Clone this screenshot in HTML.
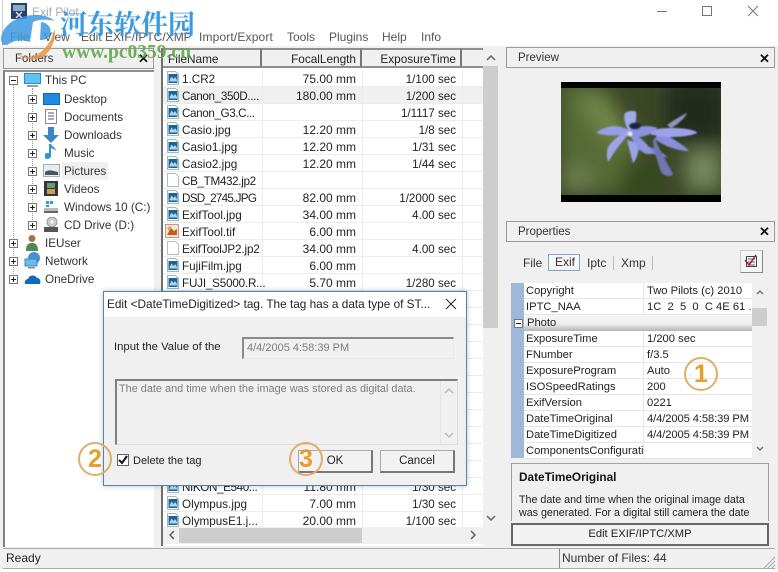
<!DOCTYPE html>
<html lang="en">
<head>
<meta charset="utf-8">
<title>Exif Pilot</title>
<style>
html,body{margin:0;padding:0}
body{width:778px;height:572px;overflow:hidden;position:relative;background:#f0f0f0;font-family:"Liberation Sans",sans-serif;font-size:12px;color:#222}
div,span,svg{position:absolute;box-sizing:border-box}
.t{white-space:nowrap;line-height:16px;height:16px}
.r{text-align:right}
.m{color:#555;top:29px}
.hd{background:#f0f0f0;border:1px solid #9a9a9a;height:21px;line-height:21px;padding-left:11px;color:#333;font-size:11.5px}
.x{color:#111;font-weight:bold;font-size:13px}
.cell{top:48px;height:20px;background:#f0f0f0;border-top:2px solid #8f8f8f;border-bottom:2px solid #8f8f8f;border-right:2px solid #777;line-height:19px;white-space:nowrap;font-size:11.8px}
.row{left:163px;width:320px;height:17px;border-bottom:1px solid #ececec;line-height:17px;white-space:nowrap}
.row b{font-weight:normal;position:absolute;top:1px}
.row .a{left:19px;font-size:11.7px}
.row .b{left:99px;width:94px;text-align:right}
.row .c{left:199px;width:94px;text-align:right;font-size:11.6px}
.row svg{left:4px;top:1px}
.p{left:524px;width:228px;height:16px;border-bottom:1px solid #e6e6e6;line-height:15px;white-space:nowrap;font-size:11.2px;color:#222}
.p b{position:absolute;font-weight:normal;top:1px}
.p .n{left:2px;width:117px;overflow:hidden}
.p .v{left:123px}
.tree{line-height:18px;height:18px;white-space:nowrap;color:#333;font-size:11.7px;margin-top:1px}
.pm{width:9px;height:9px;background:#fff;border:1px solid #777}
.pm:before{content:"";position:absolute;left:1px;top:3px;width:5px;height:1px;background:#222}
.pm.pl:after{content:"";position:absolute;left:3px;top:1px;width:1px;height:5px;background:#222}
.circ{width:34px;height:34px;border-radius:50%;border:2px solid #e0ad6a;background:transparent;text-align:center;color:#e89c2a;font:bold 25px/30px "Liberation Sans",sans-serif}
.btn{background:#f2f2f2;border:1px solid #aaa;border-right:2px solid #777;border-bottom:2px solid #777;text-align:center;line-height:20px;color:#222;font-size:11.5px}
</style>
</head>
<body>
<svg width="0" height="0" style="left:0;top:0">
<defs>
<symbol id="pic" viewBox="0 0 12 14"><path d="M.5.5h8l3 3v10H.5z" fill="#fff" stroke="#9bb"/><rect x="1.500" y="3" width="9" height="9" fill="#1b6197"/><path d="M2.500 9.500l2-4 2 2.500 1.500-2 2 3v1.500H2.500z" fill="#a9d6ee"/></symbol>
<symbol id="blank" viewBox="0 0 12 14"><path d="M.5.5h8l3 3v10H.5z" fill="#fff" stroke="#bbb"/></symbol>
<symbol id="tif" viewBox="0 0 14 14"><rect x=".5" y=".5" width="13" height="13" fill="#f5e8d5" stroke="#b99"/><path d="M2 11l4-7 3 3 3-2v6z" fill="#c8581f"/><path d="M2 4l3-2 2 2-3 3z" fill="#e8a050"/></symbol>
</defs>
</svg>

<!-- title + menu -->
<div style="left:0;top:0;width:778px;height:46px;background:#fff"></div>
<div style="left:2px;top:0;width:1px;height:46px;background:#ccc"></div>
<svg style="left:11px;top:3px" width="16" height="16" viewBox="0 0 16 16"><rect width="16" height="16" fill="#26406e"/><rect x="2" y="2" width="12" height="6" fill="#8ea8cc"/><path d="M5 9l6 6M11 9l-6 6" stroke="#ddd" stroke-width="1.500"/></svg>
<div class="t" style="left:32px;top:4px;color:#aaa">Exif Pilot</div>

<div class="t m" style="left:10px">File</div>
<div class="t m" style="left:44px">View</div>
<div class="t m" style="left:81px">Edit EXIF/IPTC/XMP</div>
<div class="t m" style="left:199px;letter-spacing:.15px">Import/Export</div>
<div class="t m" style="left:287px">Tools</div>
<div class="t m" style="left:329px">Plugins</div>
<div class="t m" style="left:382px">Help</div>
<div class="t m" style="left:421px">Info</div>
<svg style="left:650px;top:0" width="128" height="24" viewBox="0 0 128 24" fill="none" stroke="#777"><path d="M7 11.500h10"/><rect x="52.500" y="6.500" width="9" height="9"/><path d="M98 6l10 10M108 6l-10 10"/></svg>

<!-- folders panel -->
<div class="hd" style="left:3px;top:48px;width:151px">Folders</div>
<div class="x t" style="left:138px;top:51px">✕</div>
<div style="left:3px;top:70px;width:151px;height:477px;background:#fff;border-left:2px solid #808080;border-top:2px solid #909090"></div>
<div style="left:13px;top:85px;height:195px;border-left:1px dotted #999"></div>
<div style="left:32px;top:88px;height:140px;border-left:1px dotted #999"></div>

<span class="pm" style="left:9px;top:76px"></span>
<svg style="left:24px;top:73px" width="17" height="16" viewBox="0 0 17 16"><rect x=".5" y=".5" width="16" height="10" fill="#5cc4f5" stroke="#2a88c8"/><rect x="3" y="12" width="11" height="2" fill="#99a"/></svg>
<div class="tree" style="left:45px;top:71px">This PC</div>

<span class="pm pl" style="left:28px;top:95px"></span>
<svg style="left:43px;top:92px" width="17" height="14"><rect x=".5" y="1.500" width="16" height="11" fill="#1f8ae0" stroke="#1565a8"/></svg>
<div class="tree" style="left:64px;top:90px">Desktop</div>

<span class="pm pl" style="left:28px;top:113px"></span>
<svg style="left:45px;top:109px" width="13" height="16" fill="none" stroke="#888"><rect x=".5" y=".5" width="11" height="14" fill="#fff"/><path d="M3 4h6M3 7h6M3 10h6" stroke="#557"/></svg>
<div class="tree" style="left:64px;top:108px">Documents</div>

<span class="pm pl" style="left:28px;top:131px"></span>
<svg style="left:43px;top:127px" width="16" height="16"><path d="M5 0h6v8h5l-8 8-8-8h5z" fill="#3d85c6"/></svg>
<div class="tree" style="left:64px;top:126px">Downloads</div>

<span class="pm pl" style="left:28px;top:149px"></span>
<svg style="left:45px;top:144px" width="13" height="17"><path d="M6 0v12a3.500 3 0 1 1-2-2.700V0z" fill="#2e95d3"/><path d="M6 0c1 3 5 3 5 7-1-2-3-2-5-3z" fill="#2e95d3"/></svg>
<div class="tree" style="left:64px;top:144px">Music</div>

<span class="pm pl" style="left:28px;top:167px"></span>
<div style="left:62px;top:162px;width:46px;height:18px;background:#f0f0f0"></div>
<svg style="left:43px;top:164px" width="17" height="14"><rect x=".5" y=".5" width="16" height="12" fill="#e8eef0" stroke="#aaa"/><path d="M2 8c4-3 8-1 13 0v3H2z" fill="#456"/></svg>
<div class="tree" style="left:64px;top:162px">Pictures</div>

<span class="pm pl" style="left:28px;top:185px"></span>
<svg style="left:44px;top:181px" width="14" height="15"><rect width="14" height="15" fill="#334"/><rect x="3" y="2" width="8" height="5" fill="#6a9a70"/><rect x="3" y="8" width="8" height="5" fill="#c9a050"/></svg>
<div class="tree" style="left:64px;top:180px">Videos</div>

<span class="pm pl" style="left:28px;top:203px"></span>
<svg style="left:43px;top:200px" width="16" height="14"><rect x="1" y="8" width="14" height="5" fill="#bbb"/><rect x="1" y="11" width="14" height="2" fill="#666"/><rect x="3" y="1" width="3" height="3" fill="#2ba3c8"/><rect x="7" y="1" width="3" height="3" fill="#2ba3c8"/><rect x="3" y="5" width="3" height="2" fill="#2ba3c8"/></svg>
<div class="tree" style="left:64px;top:198px">Windows 10 (C:)</div>

<span class="pm pl" style="left:28px;top:221px"></span>
<svg style="left:43px;top:217px" width="16" height="16"><circle cx="9" cy="5" r="5" fill="#ccc" stroke="#999"/><circle cx="9" cy="5" r="1.500" fill="#fff"/><rect x="1" y="10" width="14" height="5" fill="#555"/></svg>
<div class="tree" style="left:64px;top:216px">CD Drive (D:)</div>

<span class="pm pl" style="left:9px;top:239px"></span>
<svg style="left:25px;top:234px" width="14" height="17"><circle cx="7" cy="4.500" r="3.500" fill="#a8714a"/><path d="M1 17c0-7 3-8 6-8s6 1 6 8z" fill="#4f8a50"/></svg>
<div class="tree" style="left:45px;top:234px">IEUser</div>

<span class="pm pl" style="left:9px;top:257px"></span>
<svg style="left:24px;top:252px" width="17" height="17"><circle cx="10" cy="6" r="6" fill="#4a90d0"/><rect x="1" y="7" width="12" height="7" fill="#6fb8e8" stroke="#38c"/><rect x="4" y="15" width="7" height="1.500" fill="#888"/></svg>
<div class="tree" style="left:45px;top:252px">Network</div>

<span class="pm pl" style="left:9px;top:275px"></span>
<svg style="left:24px;top:273px" width="17" height="12"><path d="M1 11c-1-3 1-5 3-5 1-4 7-5 9-1 3 0 4 3 3 6z" fill="#0f6cbd"/></svg>
<div class="tree" style="left:45px;top:270px">OneDrive</div>

<!-- file list -->
<div style="left:161px;top:48px;width:322px;height:498px;background:#fff;border-left:2px solid #707070"></div>
<div class="cell" style="left:163px;width:99px;padding-left:5px">FileName</div>
<div class="cell r" style="left:262px;width:100px;padding-right:4px">FocalLength</div>
<div class="cell r" style="left:362px;width:100px;padding-right:4px">ExposureTime</div>
<div class="cell" style="left:462px;width:21px;border-right:0"></div>

<div style="left:163px;top:70px;width:320px;height:457px;overflow:hidden">
<div class="row" style="left:0;top:0"><svg width="12" height="14"><use href="#pic"/></svg><b class="a">1.CR2</b><b class="b">75.00 mm</b><b class="c">1/100 sec</b></div>
<div class="row" style="left:0;top:17px;background:#f0f0f0"><svg width="12" height="14"><use href="#pic"/></svg><b class="a" style="letter-spacing:-.35px">Canon_350D....</b><b class="b">180.00 mm</b><b class="c">1/200 sec</b></div>
<div class="row" style="left:0;top:34px"><svg width="12" height="14"><use href="#pic"/></svg><b class="a" style="letter-spacing:-.4px">Canon_G3.C...</b><b class="c">1/1117 sec</b></div>
<div class="row" style="left:0;top:51px"><svg width="12" height="14"><use href="#pic"/></svg><b class="a">Casio.jpg</b><b class="b">12.20 mm</b><b class="c">1/8 sec</b></div>
<div class="row" style="left:0;top:68px"><svg width="12" height="14"><use href="#pic"/></svg><b class="a">Casio1.jpg</b><b class="b">12.20 mm</b><b class="c">1/31 sec</b></div>
<div class="row" style="left:0;top:85px"><svg width="12" height="14"><use href="#pic"/></svg><b class="a">Casio2.jpg</b><b class="b">12.20 mm</b><b class="c">1/44 sec</b></div>
<div class="row" style="left:0;top:102px"><svg width="12" height="14"><use href="#blank"/></svg><b class="a" style="letter-spacing:-.35px">CB_TM432.jp2</b></div>
<div class="row" style="left:0;top:119px"><svg width="12" height="14"><use href="#pic"/></svg><b class="a" style="letter-spacing:-.75px">DSD_2745.JPG</b><b class="b">82.00 mm</b><b class="c">1/2000 sec</b></div>
<div class="row" style="left:0;top:136px"><svg width="12" height="14"><use href="#pic"/></svg><b class="a">ExifTool.jpg</b><b class="b">34.00 mm</b><b class="c">4.00 sec</b></div>
<div class="row" style="left:0;top:153px"><svg width="14" height="14" style="left:2px"><use href="#tif"/></svg><b class="a">ExifTool.tif</b><b class="b">6.00 mm</b></div>
<div class="row" style="left:0;top:170px"><svg width="12" height="14"><use href="#blank"/></svg><b class="a" style="letter-spacing:-.15px">ExifToolJP2.jp2</b><b class="b">34.00 mm</b><b class="c">4.00 sec</b></div>
<div class="row" style="left:0;top:187px"><svg width="12" height="14"><use href="#pic"/></svg><b class="a">FujiFilm.jpg</b><b class="b">6.00 mm</b></div>
<div class="row" style="left:0;top:204px"><svg width="12" height="14"><use href="#pic"/></svg><b class="a" style="letter-spacing:-.2px">FUJI_S5000.R...</b><b class="b">5.70 mm</b><b class="c">1/280 sec</b></div>
<div class="row" style="left:0;top:221px"></div><div class="row" style="left:0;top:238px"></div><div class="row" style="left:0;top:255px"></div><div class="row" style="left:0;top:272px"></div><div class="row" style="left:0;top:289px"></div><div class="row" style="left:0;top:306px"></div><div class="row" style="left:0;top:323px"></div><div class="row" style="left:0;top:340px"></div><div class="row" style="left:0;top:357px"></div><div class="row" style="left:0;top:374px"></div><div class="row" style="left:0;top:391px"></div>
<div class="row" style="left:0;top:408px"><svg width="12" height="14"><use href="#pic"/></svg><b class="a" style="letter-spacing:-.4px">NIKON_E540...</b><b class="b">11.80 mm</b><b class="c">1/30 sec</b></div>
<div class="row" style="left:0;top:425px"><svg width="12" height="14"><use href="#pic"/></svg><b class="a">Olympus.jpg</b><b class="b">7.00 mm</b><b class="c">1/30 sec</b></div>
<div class="row" style="left:0;top:442px"><svg width="12" height="14"><use href="#pic"/></svg><b class="a">OlympusE1.j...</b><b class="b">20.00 mm</b><b class="c">1/100 sec</b></div>
</div>
<div style="left:262px;top:70px;width:1px;height:457px;background:#ececec"></div>
<div style="left:362px;top:70px;width:1px;height:457px;background:#ececec"></div>
<div style="left:462px;top:70px;width:1px;height:457px;background:#ececec"></div>

<!-- scrollbars -->
<div style="left:483px;top:48px;width:16px;height:479px;background:#f0f0f0"></div>
<div style="left:483px;top:66px;width:15px;height:262px;background:#cdcdcd"></div>
<svg style="left:483px;top:48px" width="16" height="490" fill="none" stroke="#606060" stroke-width="1.500"><path d="M4 12l4-4 4 4M4 468l4 4 4-4"/></svg>
<div style="left:163px;top:527px;width:336px;height:17px;background:#f0f0f0"></div>
<div style="left:179px;top:528px;width:183px;height:15px;background:#cdcdcd"></div>
<svg style="left:163px;top:527px" width="320" height="17" fill="none" stroke="#606060" stroke-width="1.500"><path d="M11 4l-4 4 4 4M308 4l4 4-4 4"/></svg>

<!-- preview -->
<div class="hd" style="left:506px;top:47px;width:269px">Preview</div>
<div class="x t" style="left:759px;top:51px">✕</div>
<svg style="left:561px;top:82px" width="160" height="120" viewBox="0 0 160 120">
<defs>
<filter id="b1" x="-30%" y="-30%" width="160%" height="160%"><feGaussianBlur stdDeviation="9"/></filter>
<filter id="b2"><feGaussianBlur stdDeviation="0.700"/></filter>
<clipPath id="cp"><rect y="6" width="160" height="107"/></clipPath>
</defs>
<rect width="160" height="120" fill="#000"/>
<g clip-path="url(#cp)">
<rect y="6" width="160" height="107" fill="#3c4727"/>
<g filter="url(#b1)">
<path d="M0 0h40l40 60-25 50H0z" fill="#566a35"/>
<path d="M15 15l30 0 25 45-25 0z" fill="#71864a"/>
<rect x="105" y="0" width="60" height="60" fill="#232a1a"/>
<rect x="125" y="68" width="35" height="40" fill="#75875e"/>
<rect x="60" y="85" width="40" height="30" fill="#34481f"/>
<rect x="0" y="85" width="30" height="25" fill="#6d7d50"/>
</g>
<g filter="url(#b2)">
<path d="M72 60c10 3 24 6 32 13 6 5-2 1-8 0-10-2-20-5-26-9z" fill="#7e84d0"/>
<path d="M98 48c12 8 24 14 30 21-10 0-24-4-34-12z" fill="#8a8edb"/>
<path d="M94 56c4 12 12 24 18 36-1 3-8 3-12-2-3-10-8-22-8-32z" fill="#7175b5"/>
<path d="M106 43c7-5 14-9 20-12-2 5-10 12-16 15z" fill="#8f94c4"/>
<path d="M84 50c12-4 26-5 42-3 6 1 11 3 10 4-8 4-26 5-38 3-6-1-11-2-14-4z" fill="#9ca2ea"/>
<path d="M68 50C64 42 62 36 64 31c3-2 9-3 11-1 1 6-1 14-4 21z" fill="#a0a8ea"/>
<path d="M70 52C58 54 44 54 36 51c-2-1 8-6 16-7 7 0 14 3 19 5z" fill="#979de6"/>
<path d="M70 50C62 58 54 68 48 79c-2 2-3-8-1-14 4-6 12-13 21-17z" fill="#9da3ea"/>
<path d="M66 58c2 8 4 16 6 23 3-3 6-10 6-20z" fill="#9da2e6"/>
<path d="M72 50c8 6 16 14 20 20 1 2-5 3-9 1-6-4-11-12-14-18z" fill="#9095e0"/>
<path d="M70 46c10-2 20-3 26 0-4 6-16 11-24 8z" fill="#8d92e0"/>
<ellipse cx="74" cy="44" rx="6" ry="3.500" fill="#1c2340"/>
<circle cx="69" cy="52" r="2.500" fill="#e2e3f0"/>
</g>
</g>
</svg>

<!-- properties -->
<div class="hd" style="left:506px;top:221px;width:269px">Properties</div>
<div class="x t" style="left:759px;top:224px">✕</div>
<div class="t" style="left:523px;top:255px;color:#333">File</div>
<div style="left:548px;top:254px;width:32px;height:17px;border:1px solid #7fa9bd;background:#f6f6f6"></div>
<div class="t" style="left:555px;top:254px;color:#333">Exif</div>
<div class="t" style="left:587px;top:255px;color:#333">Iptc</div>
<div style="left:613px;top:256px;width:1px;height:14px;background:#bbb"></div>
<div class="t" style="left:621px;top:255px;color:#333">Xmp</div>
<div style="left:652px;top:256px;width:1px;height:14px;background:#bbb"></div>
<div style="left:740px;top:250px;width:23px;height:23px;background:#f5f5f5;border:1px solid #ccc;border-right:1px solid #888;border-bottom:1px solid #888"></div>
<svg style="left:744px;top:254px" width="15" height="15" fill="none"><rect x="2.500" y="2.500" width="10" height="10" stroke="#444"/><path d="M4 5h7M4 8h7M4 11h7" stroke="#666"/><path d="M1 6l4 5 7-10" stroke="#a02040" stroke-width="1.500"/></svg>

<div style="left:511px;top:283px;width:257px;height:175px;background:#fff"></div>
<div style="left:643px;top:283px;width:1px;height:175px;background:#e6e6e6"></div>
<div style="left:511px;top:283px;width:13px;height:175px;background:#9db8d8"></div>
<div class="p" style="top:283px"><b class="n">Copyright</b><b class="v">Two Pilots (c) 2010</b></div>
<div class="p" style="top:299px"><b class="n">IPTC_NAA</b><b class="v">1C&nbsp; 2&nbsp; 5&nbsp; 0&nbsp; C 4E 61 ...</b></div>
<div class="p" style="top:315px;background:linear-gradient(#f6f6f6,#f0f0f0 55%,#b4b4b4);border:0"><b style="left:3px">Photo</b></div>
<span class="pm" style="left:514px;top:319px"></span>
<div class="p" style="top:331px"><b class="n">ExposureTime</b><b class="v">1/200 sec</b></div>
<div class="p" style="top:347px"><b class="n">FNumber</b><b class="v">f/3.5</b></div>
<div class="p" style="top:363px"><b class="n">ExposureProgram</b><b class="v">Auto</b></div>
<div class="p" style="top:379px"><b class="n">ISOSpeedRatings</b><b class="v">200</b></div>
<div class="p" style="top:395px"><b class="n">ExifVersion</b><b class="v">0221</b></div>
<div class="p" style="top:411px"><b class="n">DateTimeOriginal</b><b class="v" style="letter-spacing:-.1px">4/4/2005 4:58:39 PM</b></div>
<div class="p" style="top:427px"><b class="n">DateTimeDigitized</b><b class="v" style="letter-spacing:-.1px">4/4/2005 4:58:39 PM</b></div>
<div class="p" style="top:443px"><b class="n">ComponentsConfiguration</b></div>
<div style="left:752px;top:283px;width:16px;height:175px;background:#f0f0f0"></div>
<div style="left:752px;top:308px;width:15px;height:18px;background:#cdcdcd"></div>
<svg style="left:752px;top:283px" width="16" height="175" fill="none" stroke="#777" stroke-width="1.500"><path d="M5 11l3-3 3 3M5 164l3 3 3-3"/></svg>

<div style="left:511px;top:463px;width:258px;height:58px;background:#f0f0f0;border:1px solid #a0a0a0;border-bottom:0;overflow:hidden">
<div class="t" style="left:7px;top:5px;font-weight:bold;color:#111;font-size:11.8px">DateTimeOriginal</div>
<div style="left:7px;top:30px;width:240px;line-height:13px;font-size:10.7px;color:#222">The date and time when the original image data was generated. For a digital still camera the date and time the picture was taken are recorded.</div>
</div>
<div class="btn" style="left:511px;top:523px;width:258px;height:23px;border:2px solid #666;line-height:18px;font-size:11.2px">Edit EXIF/IPTC/XMP</div>

<!-- status -->
<div style="left:3px;top:548px;width:772px;height:21px;background:#f0f0f0;border-top:1px solid #aaa;border-bottom:1px solid #aaa"></div>
<div class="t" style="left:6px;top:550px">Ready</div>
<div style="left:559px;top:549px;width:198px;height:19px;border-left:1px solid #888"></div>
<div class="t" style="left:562px;top:550px;color:#333">Number of Files: 44</div>
<svg style="left:762px;top:555px" width="14" height="14" stroke="#aaa"><path d="M13 2L2 13M13 6l-7 7M13 10l-3 3"/></svg>
<div style="left:0;top:569px;width:778px;height:3px;background:#fff"></div>

<!-- dialog -->
<div style="left:103px;top:291px;width:364px;height:195px;background:#f0f0f0;border:1px solid #4f86ad;box-shadow:0 0 5px rgba(80,80,80,.35)"></div>
<div style="left:104px;top:292px;width:362px;height:25px;background:#fff"></div>
<div class="t" style="left:107px;top:296px;color:#222;font-size:11.8px">Edit &lt;DateTimeDigitized&gt; tag. The tag has a data type of ST...</div>
<svg style="left:445px;top:298px" width="12" height="12" stroke="#222" fill="none"><path d="M1 1l10 10M11 1L1 11"/></svg>
<div class="t" style="left:114px;top:339px;color:#222;font-size:11.3px">Input the Value of the</div>
<div style="left:242px;top:337px;width:212px;height:22px;background:#f0f0f0;border:1px solid #e8e8e8;border-top:2px solid #8a8a8a;border-left:2px solid #8a8a8a"></div>
<div class="t" style="left:247px;top:340px;color:#7d7d7d;font-size:11px">4/4/2005 4:58:39 PM</div>
<div style="left:115px;top:379px;width:343px;height:66px;background:#f0f0f0;border-top:2px solid #808080;border-left:2px solid #808080;border-right:1px solid #ddd;border-bottom:1px solid #ddd"></div>
<div class="t" style="left:119px;top:381px;color:#7d7d7d;font-size:10.9px">The date and time when the image was stored as digital data.</div>
<div style="left:440px;top:381px;width:1px;height:63px;background:#e6e6e6"></div>
<svg style="left:441px;top:381px" width="16" height="62" fill="none" stroke="#bbb" stroke-width="1.500"><path d="M4 12l4-4 4 4M4 52l4 4 4-4"/></svg>
<div style="left:117px;top:454px;width:12px;height:12px;background:#fff;border:1px solid #666"></div>
<svg style="left:118px;top:455px" width="10" height="10" fill="none" stroke="#111" stroke-width="2"><path d="M1 5l3 3 5-7"/></svg>
<div class="t" style="left:133px;top:453px;color:#222;font-size:11px">Delete the tag</div>
<div class="btn" style="left:298px;top:450px;width:75px;height:23px">OK</div>
<div class="btn" style="left:380px;top:450px;width:75px;height:23px">Cancel</div>

<!-- callouts -->
<div class="circ" style="left:684px;top:357px">1</div>
<div class="circ" style="left:78px;top:442px">2</div>
<div class="circ" style="left:289px;top:442px">3</div>

<!-- watermark, on top of the window with slight transparency -->
<svg style="left:0;top:8px;opacity:.85" width="60" height="52" viewBox="0 0 60 52">
<path d="M1 30C3 16 18 7 36 7c8 0 14 2 19 6-8-2-16-2-22 1l-3 20c-8-3-16-2-23 3l-4 0C2 36 1 33 1 30z" fill="#3a9ae0"/>
<path d="M41 14c8 1 11 7 9 13-2 4-5 5-10 5z" fill="#3a9ae0"/>
<path d="M8 38c10 12 22 13 30 8 8-5 14-14 17-25 1 12-4 22-12 28-10 5-24 2-35-11z" fill="#e8973e"/>
</svg>
<div class="t" style="left:60px;top:5px;height:36px;font:bold 27px/36px 'Noto Serif CJK SC','Noto Sans CJK SC',serif;color:#3a9be0">河东软件园</div>
<div class="t" style="left:62px;top:42px;height:22px;font:bold 19.500px/22px 'Liberation Serif',serif;color:#62a84a;opacity:.9">www.pc0359.cn</div>
</body>
</html>
